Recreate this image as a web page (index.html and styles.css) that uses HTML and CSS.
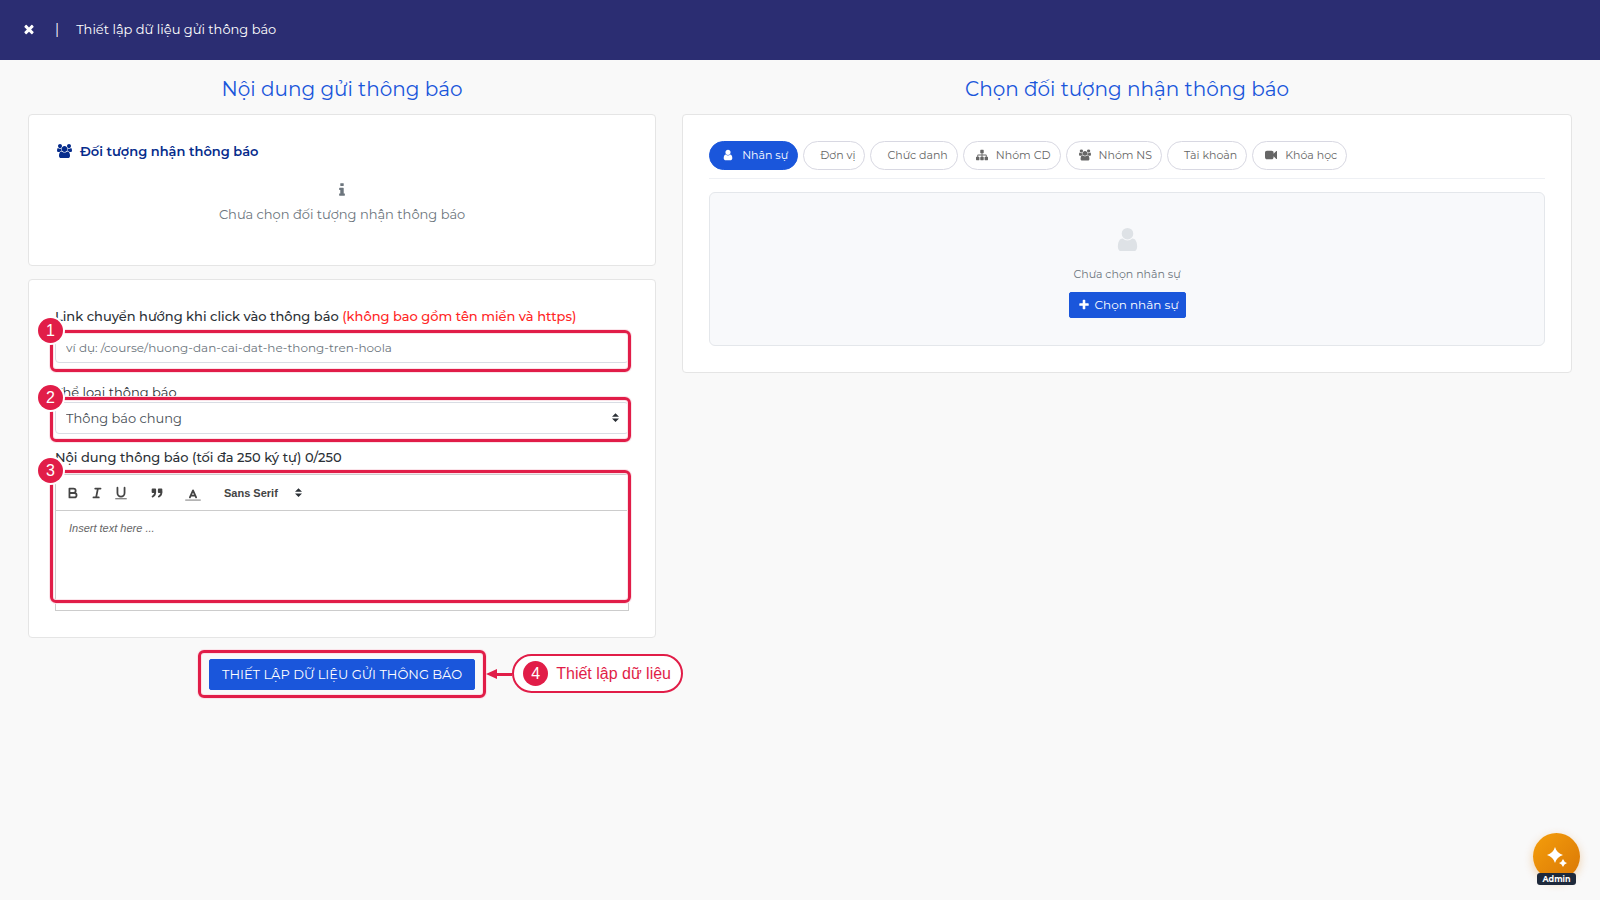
FILE: index.html
```html
<!DOCTYPE html>
<html lang="vi">
<head>
    <meta charset="UTF-8">
    <meta name="viewport" content="width=device-width, initial-scale=1.0">
    <title>Thiết lập dữ liệu gửi thông báo</title>
    <link rel="stylesheet" href="styles.css">
</head>
<body>
    <!-- Icon dùng chung -->
    <svg class="sprite" aria-hidden="true">
        <symbol id="i-user" viewBox="0 0 1792 1792"><path d="M1536 1399q0 109-62.5 187t-150.5 78h-854q-88 0-150.5-78t-62.5-187q0-85 8.5-160.5t31.5-152 58.5-131 94-89 134.5-34.5q131 128 313 128t313-128q76 0 134.5 34.5t94 89 58.5 131 31.5 152 8.5 160.5zm-256-887q0 159-112.5 271.5t-271.5 112.5-271.5-112.5-112.5-271.5 112.5-271.5 271.5-112.5 271.5 112.5 112.5 271.5z"/></symbol>
        <symbol id="i-users" viewBox="0 0 1920 1792"><path d="M593 896q-162 5-265 128h-134q-82 0-138-40.5t-56-118.5q0-353 124-353 6 0 43.5 21t97.5 42.5 119 21.5q67 0 133-23-5 37-5 66 0 139 81 256zm1071 637q0 120-73 189.5t-194 69.5h-874q-121 0-194-69.5t-73-189.5q0-53 3.5-103.5t14-109 26.5-108.5 43-97.5 62-81 85.5-53.5 111.5-20q10 0 43 21.5t73 48 107 48 135 21.5 135-21.5 107-48 73-48 43-21.5q61 0 111.5 20t85.5 53.5 62 81 43 97.5 26.5 108.5 14 109 3.5 103.5zm-1024-1277q0 106-75 181t-181 75-181-75-75-181 75-181 181-75 181 75 75 181zm704 384q0 159-112.5 271.5t-271.5 112.5-271.5-112.5-112.5-271.5 112.5-271.5 271.5-112.5 271.5 112.5 112.5 271.5zm576 225q0 78-56 118.5t-138 40.5h-134q-103-123-265-128 81-117 81-256 0-29-5-66 66 23 133 23 59 0 119-21.5t97.5-42.5 43.5-21q124 0 124 353zm-128-609q0 106-75 181t-181 75-181-75-75-181 75-181 181-75 181 75 75 181z"/></symbol>
    </svg>

    <header class="topbar">
        <button type="button" class="topbar-close" aria-label="Đóng">
            <svg class="icon" viewBox="0 0 1792 1792"><path d="M1490 1322q0 40-28 68l-136 136q-28 28-68 28t-68-28l-294-294-294 294q-28 28-68 28t-68-28l-136-136q-28-28-28-68t28-68l294-294-294-294q-28-28-28-68t28-68l136-136q28-28 68-28t68 28l294 294 294-294q28-28 68-28t68 28l136 136q28 28 28 68t-28 68l-294 294 294 294q28 28 28 68z"/></svg>
        </button>
        <span class="topbar-divider">|</span>
        <span class="topbar-title">Thiết lập dữ liệu gửi thông báo</span>
    </header>

    <main class="layout">
        <section class="column">
            <h1 class="column-title">Nội dung gửi thông báo</h1>

            <div class="card target-card">
                <h2 class="target-title"><svg class="icon icon-wide"><use href="#i-users"/></svg>Đối tượng nhận thông báo</h2>
                <div class="target-empty">
                    <svg class="icon" viewBox="0 0 1792 1792"><path d="M1216 1344v128q0 26-19 45t-45 19h-512q-26 0-45-19t-19-45v-128q0-26 19-45t45-19h64v-384h-64q-26 0-45-19t-19-45v-128q0-26 19-45t45-19h384q26 0 45 19t19 45v576h64q26 0 45 19t19 45zm-128-1152v192q0 26-19 45t-45 19h-256q-26 0-45-19t-19-45v-192q0-26 19-45t45-19h256q26 0 45 19t19 45z"/></svg>
                    <p>Chưa chọn đối tượng nhận thông báo</p>
                </div>
            </div>

            <form class="card form-card" id="notifyForm">
                <label class="label label-strong" for="link">Link chuyển hướng khi click vào thông báo <span class="label-note">(không bao gồm tên miền và https)</span></label>
                <div class="field field-link">
                    <input type="text" id="link" class="control" placeholder="ví dụ: /course/huong-dan-cai-dat-he-thong-tren-hoola">
                    <div class="marker"><span class="step">1</span></div>
                </div>

                <label class="label" for="category">Thể loại thông báo</label>
                <div class="field field-category">
                    <select id="category" class="control">
                        <option>Thông báo chung</option>
                    </select>
                    <svg class="caret" viewBox="0 0 8 10"><path d="M4 0l4 4H0zM4 10L0 6h8z"/></svg>
                    <div class="marker"><span class="step">2</span></div>
                </div>

                <label class="label label-strong" for="content">Nội dung thông báo (tối đa 250 ký tự) 0/250</label>
                <div class="field field-editor">
                    <div class="editor">
                        <div class="toolbar">
                            <div class="tool-group">
                                <button type="button" class="tool" aria-label="Đậm"><svg viewBox="0 0 18 18"><path d="M5,4H9.5a2.5,2.5,0,0,1,0,5H5ZM5,9h5.500a2.500,2.500,0,0,1,0,5H5Z"/></svg></button>
                                <button type="button" class="tool" aria-label="Nghiêng"><svg viewBox="0 0 18 18"><path d="M7 4H13M5 14H11M8 14L10 4"/></svg></button>
                                <button type="button" class="tool" aria-label="Gạch chân"><svg viewBox="0 0 18 18"><path d="M5,3V9a4,4,0,0,0,8,0V3"/><path class="thin" d="M3 15.500H15"/></svg></button>
                            </div>
                            <div class="tool-group">
                                <button type="button" class="tool" aria-label="Trích dẫn"><svg viewBox="0 0 18 18"><path class="solid" d="M4 5h3v3H4zM11 5h3v3h-3z"/><path d="M7,8c0,4-3,5-3,5M14,8c0,4-3,5-3,5"/></svg></button>
                            </div>
                            <div class="tool-group">
                                <button type="button" class="tool" aria-label="Màu chữ"><svg viewBox="0 0 18 18"><path d="M5.500 14L9 6l3.500 8M6.400 12h5.200"/><path class="faded" d="M1 17H17"/></svg></button>
                            </div>
                            <div class="font-picker">
                                <select aria-label="Phông chữ">
                                    <option>Sans Serif</option>
                                    <option>Serif</option>
                                    <option>Monospace</option>
                                </select>
                                <svg class="caret" viewBox="0 0 8 10"><path d="M4 0l4 4H0zM4 10L0 6h8z"/></svg>
                            </div>
                        </div>
                        <textarea id="content" maxlength="250" placeholder="Insert text here ..."></textarea>
                    </div>
                    <div class="marker"><span class="step">3</span></div>
                </div>
            </form>

            <div class="submit-row">
                <div class="submit-wrap">
                    <button type="submit" form="notifyForm" class="btn btn-submit">THIẾT LẬP DỮ LIỆU GỬI THÔNG BÁO</button>
                    <div class="marker"></div>
                    <div class="callout">
                        <svg class="callout-arrow" viewBox="0 0 26 10"><path d="M0 5l11-5v10z"/><path d="M10 4h16v3H10z"/></svg>
                        <div class="callout-body"><span class="step">4</span>Thiết lập dữ liệu</div>
                    </div>
                </div>
            </div>
        </section>

        <section class="column">
            <h1 class="column-title">Chọn đối tượng nhận thông báo</h1>

            <div class="card picker-card">
                <nav class="tabs">
                    <button type="button" class="tab active"><svg class="icon"><use href="#i-user"/></svg>Nhân sự</button>
                    <button type="button" class="tab tab-plain">Đơn vị</button>
                    <button type="button" class="tab tab-plain">Chức danh</button>
                    <button type="button" class="tab"><svg class="icon" viewBox="0 0 1792 1792"><path d="M1792 1248v320q0 40-28 68t-68 28h-320q-40 0-68-28t-28-68v-320q0-40 28-68t68-28h96v-192h-512v192h96q40 0 68 28t28 68v320q0 40-28 68t-68 28h-320q-40 0-68-28t-28-68v-320q0-40 28-68t68-28h96v-192h-512v192h96q40 0 68 28t28 68v320q0 40-28 68t-68 28h-320q-40 0-68-28t-28-68v-320q0-40 28-68t68-28h96v-192q0-52 38-90t90-38h512v-192h-96q-40 0-68-28t-28-68v-320q0-40 28-68t68-28h320q40 0 68 28t28 68v320q0 40-28 68t-68 28h-96v192h512q52 0 90 38t38 90v192h96q40 0 68 28t28 68z"/></svg>Nhóm CD</button>
                    <button type="button" class="tab"><svg class="icon"><use href="#i-users"/></svg>Nhóm NS</button>
                    <button type="button" class="tab tab-plain">Tài khoản</button>
                    <button type="button" class="tab"><svg class="icon" viewBox="0 0 1792 1792"><path d="M1792 352v1088q0 42-39 59-13 5-25 5-27 0-45-19l-403-403v166q0 119-84.5 203.5t-203.5 84.5h-704q-119 0-203.5-84.5t-84.5-203.5v-704q0-119 84.5-203.5t203.5-84.5h704q119 0 203.5 84.5t84.5 203.5v165l403-402q18-19 45-19 12 0 25 5 39 17 39 59z"/></svg>Khóa học</button>
                </nav>
                <div class="picker-empty">
                    <svg class="icon icon-big"><use href="#i-user"/></svg>
                    <p>Chưa chọn nhân sự</p>
                    <button type="button" class="btn btn-pick">
                        <svg class="icon" viewBox="0 0 1792 1792"><path d="M1600 736v192q0 40-28 68t-68 28h-416v416q0 40-28 68t-68 28h-192q-40 0-68-28t-28-68v-416h-416q-40 0-68-28t-28-68v-192q0-40 28-68t68-28h416v-416q0-40 28-68t68-28h192q40 0 68 28t28 68v416h416q40 0 68 28t28 68z"/></svg>
                        Chọn nhân sự
                    </button>
                </div>
            </div>
        </section>
    </main>

    <button type="button" class="assistant">
        <svg viewBox="0 0 22 22"><path d="M9 1Q10.800 7.200 17 9Q10.800 10.800 9 17Q7.200 10.800 1 9Q7.200 7.200 9 1Z"/><path d="M17 13Q18 16 21 17Q18 18 17 21Q16 18 13 17Q16 16 17 13Z"/></svg>
        <span class="assistant-tag">Admin</span>
    </button>
</body>
</html>
```

FILE: styles.css
```css
* {
    box-sizing: border-box;
}
body {
    margin: 0;
    min-height: 100vh;
    background: #f9f9f9;
    color: #2b3036;
    font-family: Montserrat, Inter, sans-serif;
    font-size: 13px;
    line-height: 20px;
}
h1, h2, p {
    margin: 0;
    font-weight: 400;
}
button, input, select, textarea {
    font: inherit;
    color: inherit;
}
button {
    cursor: pointer;
}
.sprite {
    position: absolute;
    width: 0;
    height: 0;
}
.icon {
    width: 14px;
    height: 14px;
    flex: none;
    fill: currentColor;
}

/* Thanh trên cùng */
.topbar {
    display: flex;
    align-items: center;
    height: 60px;
    padding: 0 22px 2px;
    background: #2b2d72;
    color: #fff;
    font-size: 14px;
}
.topbar-close {
    display: flex;
    padding: 0;
    border: 0;
    background: none;
}
.topbar-divider {
    margin: 0 17px 0 19px;
}
.topbar-title {
    font-size: 13px;
}

/* Bố cục hai cột */
.layout {
    display: grid;
    grid-template-columns: 12fr 17fr;
    gap: 26px;
    align-items: start;
    padding: 14px 28px;
}
.column-title {
    margin-bottom: 10px;
    color: #1a56db;
    font-size: 20px;
    line-height: 30px;
    text-align: center;
}
.card {
    padding: 26px;
    background: #fff;
    border: 1px solid #e5e5e5;
    border-radius: 4px;
}

/* Đối tượng nhận */
.target-card {
    min-height: 152px;
    margin-bottom: 13px;
}
.target-title {
    display: flex;
    align-items: center;
    gap: 8px;
    padding-left: 2px;
    color: #062c8c;
    font-size: 13px;
    font-weight: 600;
}
.icon-wide {
    width: 15px;
}
.target-empty {
    display: flex;
    flex-direction: column;
    align-items: center;
    gap: 6px;
    padding-top: 21px;
    color: #6c757d;
}
.target-empty .icon {
    width: 16px;
    height: 16px;
}

/* Biểu mẫu */
.label {
    display: block;
}
.label-strong {
    font-weight: 500;
}
.label-note {
    color: #ff2525;
}
.field {
    position: relative;
}
.control {
    display: block;
    width: 100%;
    height: 32px;
    padding: 0 10px;
    background: #fff;
    border: 1px solid #d9dde4;
    border-radius: 4px;
    color: #495057;
    appearance: none;
}
input.control {
    font-size: 12px;
}
.control::placeholder {
    color: #6c757d;
    opacity: 1;
}
.caret {
    position: absolute;
    top: 50%;
    right: 10px;
    width: 7px;
    height: 9px;
    margin-top: -5px;
    fill: #2b3036;
    pointer-events: none;
}
.field-link {
    margin: 5px 0 19px;
}
.field-category {
    margin-bottom: 13px;
}
.field-editor {
    margin-top: 7px;
}
.editor {
    border: 1px solid #ccc;
    background: #fff;
    font-family: "Liberation Sans", Arial, sans-serif;
}
.toolbar {
    display: flex;
    align-items: center;
    gap: 12px;
    height: 36px;
    padding: 0 5px;
    border-bottom: 1px solid #ccc;
}
.tool-group {
    display: flex;
}
.tool {
    display: flex;
    justify-content: center;
    width: 24px;
    padding: 0;
    border: 0;
    background: none;
}
.tool svg {
    width: 16px;
    height: 16px;
    fill: none;
    stroke: #444;
    stroke-width: 2;
    stroke-linecap: round;
    stroke-linejoin: round;
}
.tool .thin {
    stroke-width: 1;
}
.tool .solid {
    fill: #444;
}
.tool .faded {
    opacity: 0.4;
}
.font-picker {
    position: relative;
}
.font-picker select {
    width: 90px;
    padding: 0 7px;
    border: 0;
    background: none;
    color: #444;
    font-size: 11px;
    font-weight: 700;
    appearance: none;
}
.font-picker .caret {
    right: 5px;
}
.editor textarea {
    display: block;
    width: 100%;
    height: 99px;
    padding: 8px 13px;
    border: 0;
    background: none;
    font-size: 11px;
    line-height: 18px;
    resize: none;
}
.editor textarea::placeholder {
    color: #666;
    font-style: italic;
    opacity: 1;
}

/* Khung đánh dấu các bước */
.marker {
    position: absolute;
    border: 3px solid #e11d48;
    border-radius: 6px;
    box-shadow: 0 0 0 1px #fbe3e9, inset 0 0 0 1px #fbe3e9;
    pointer-events: none;
}
.field .marker {
    left: -5px;
    right: -2px;
}
.field-link .marker {
    top: -1px;
    bottom: -9px;
}
.field-category .marker {
    top: -5px;
    bottom: -8px;
}
.field-editor .marker {
    top: -4px;
    bottom: 8px;
}
.submit-wrap .marker {
    inset: -9px -11px -8px;
}
.step {
    display: flex;
    align-items: center;
    justify-content: center;
    flex: none;
    width: 25px;
    height: 25px;
    border-radius: 50%;
    background: #e11d48;
    color: #fff;
    font-family: "Liberation Sans", Arial, sans-serif;
    font-size: 16px;
}
.marker .step {
    position: absolute;
    top: -15px;
    left: -15px;
    box-shadow: 0 0 0 2px #fff;
}

/* Nút gửi */
.btn {
    border: 1px solid #1a56db;
    border-radius: 2px;
    background: #1a56db;
    color: #fff;
}
.submit-row {
    display: flex;
    justify-content: center;
    padding-top: 21px;
}
.submit-wrap {
    position: relative;
}
.btn-submit {
    display: block;
    height: 31px;
    padding: 0 12px 1px;
    white-space: nowrap;
}
.callout {
    position: absolute;
    top: -5px;
    left: 100%;
    display: flex;
    align-items: center;
    margin-left: 11px;
}
.callout-arrow {
    width: 26px;
    height: 10px;
    fill: #e11d48;
}
.callout-body {
    display: flex;
    align-items: center;
    gap: 8px;
    height: 39px;
    padding: 0 10px 0 9px;
    border: 2px solid #e11d48;
    border-radius: 20px;
    background: #fff;
    color: #e11d48;
    font-family: "Liberation Sans", Arial, sans-serif;
    font-size: 16px;
    white-space: nowrap;
}

/* Chọn đối tượng */
.tabs {
    display: flex;
    flex-wrap: wrap;
    gap: 5px;
    padding-bottom: 8px;
    border-bottom: 1px solid #eef0f4;
}
.tab {
    display: flex;
    align-items: center;
    gap: 8px;
    height: 29px;
    padding: 0 9px 1px 12px;
    border: 1px solid #d8d8e2;
    border-radius: 15px;
    background: #fff;
    color: #666;
    font-size: 11px;
}
.tab .icon {
    width: 12px;
    height: 12px;
}
.tab-plain {
    padding-left: 16px;
}
.tab.active {
    background: #1a56db;
    border-color: #1a56db;
    color: #fff;
}
.picker-empty {
    display: flex;
    flex-direction: column;
    align-items: center;
    margin-top: 13px;
    padding: 33px 0 27px;
    border: 1px solid #e4e7eb;
    border-radius: 6px;
    background: #f8f9fb;
    color: #6c757d;
    font-size: 11px;
}
.icon-big {
    width: 27px;
    height: 27px;
    margin-bottom: 11px;
    color: #dee2e6;
}
.btn-pick {
    display: flex;
    align-items: center;
    gap: 5px;
    height: 26px;
    margin-top: 8px;
    padding: 0 6px 0 8px;
    font-size: 12px;
}
.btn-pick .icon {
    width: 12px;
    height: 12px;
}

/* Nút trợ lý */
.assistant {
    position: fixed;
    right: 20px;
    bottom: 20px;
    width: 47px;
    height: 47px;
    padding: 0;
    border: 0;
    border-radius: 50%;
    background: linear-gradient(135deg, #f59e0b, #d97706);
    box-shadow: 0 3px 10px rgba(217, 119, 6, 0.3);
}
.assistant svg {
    display: block;
    width: 22px;
    height: 22px;
    margin: 0 auto;
    fill: #fff;
}
.assistant-tag {
    position: absolute;
    left: 4px;
    right: 4px;
    bottom: -5px;
    border-radius: 3px;
    background: #1e293b;
    color: #fff;
    font-size: 8px;
    font-weight: 700;
    line-height: 12px;
    text-align: center;
}
```
